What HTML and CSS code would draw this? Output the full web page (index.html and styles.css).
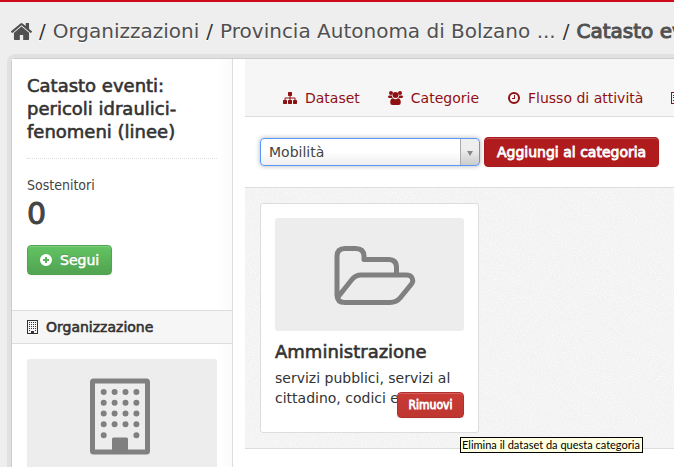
FILE: index.html
```html
<!DOCTYPE html>
<html lang="it">
<head>
    <meta charset="UTF-8">
    <meta name="viewport" content="width=device-width, initial-scale=1.0">
    <title>Catasto eventi: pericoli idraulici-fenomeni (linee)</title>
    <link rel="stylesheet" href="styles.css">
</head>
<body>
    <nav class="breadcrumb" aria-label="Percorso">
        <a href="#" class="home" aria-label="Home">
            <svg viewBox="96 253 1600 1283" width="21" height="17"><path d="M1472 992v480q0 26-19 45t-45 19h-384v-384h-256v384h-384q-26 0-45-19t-19-45v-480q0-1 .5-3t.5-3l575-474 575 474q1 2 1 6zm223-69l-62 74q-8 9-21 11h-3q-13 0-21-7l-692-577-692 577q-12 8-24 7-13-2-21-11l-62-74q-8-10-7-23.500t11-21.500l719-599q32-26 76-26t76 26l244 204v-195q0-14 9-23t23-9h192q14 0 23 9t9 23v408l219 182q10 8 11 21.500t-7 23.500z"/></svg>
        </a>
        <span class="divider">/</span>
        <a href="#">Organizzazioni</a>
        <span class="divider">/</span>
        <a href="#">Provincia Autonoma di Bolzano ...</a>
        <span class="divider">/</span>
        <a href="#" class="active">Catasto eventi: pericoli idraulici-fenomeni (linee)</a>
    </nav>

    <div class="wrapper">
        <!-- Barra laterale -->
        <aside class="sidebar">
            <section class="info">
                <h1>Catasto eventi: pericoli idraulici-fenomeni (linee)</h1>
                <dl class="nums">
                    <dt>Sostenitori</dt>
                    <dd>0</dd>
                </dl>
                <button type="button" class="btn btn-success">
                    <svg viewBox="0 0 12 12" width="12" height="12"><path fill-rule="evenodd" d="M6 0a6 6 0 1 0 0 12A6 6 0 0 0 6 0zM5 3h2v2h2v2H7v2H5V7H3V5h2z"/></svg>
                    Segui
                </button>
            </section>
            <section>
                <h2 class="module-heading">
                    <svg viewBox="0 0 11 14" width="11" height="14"><path fill-rule="evenodd" d="M0 0h11v14H0zM1 1v12h3v-2h3v2h3V1zM2 2h1v1H2zM4 2h1v1H4zM6 2h1v1H6zM8 2h1v1H8zM2 4h1v1H2zM4 4h1v1H4zM6 4h1v1H6zM8 4h1v1H8zM2 6h1v1H2zM4 6h1v1H4zM6 6h1v1H6zM8 6h1v1H8zM2 8h1v1H2zM4 8h1v1H4zM6 8h1v1H6zM8 8h1v1H8zM2 10h1v1H2zM8 10h1v1H8z"/></svg>
                    Organizzazione
                </h2>
                <div class="org-image">
                    <svg class="picture" viewBox="0 0 190 114" role="img" aria-label="Organizzazione">
                        <rect x="65.500" y="22" width="55" height="71" rx="1" fill="none" stroke="#808080" stroke-width="5"/>
                        <path fill="#808080" d="M85 95V80q0-1.500 1.500-1.500h13q1.500 0 1.500 1.500v15z"/>
                        <path fill="none" stroke="#808080" stroke-width="6" stroke-linecap="round" stroke-dasharray="0 10.900" d="M76.700 33h33M76.700 43.700h33M76.700 54.600h33M76.700 65.300h33"/>
                        <path fill="none" stroke="#808080" stroke-width="6" stroke-linecap="round" d="M76.700 76.200h.01M109.400 76.200h.01"/>
                    </svg>
                </div>
            </section>
        </aside>

        <!-- Contenuto principale -->
        <main class="primary">
            <nav class="tabs">
                <a href="#">
                    <svg viewBox="0 128 1792 1536" width="14" height="12"><path d="M1792 1248v320q0 40-28 68t-68 28h-320q-40 0-68-28t-28-68v-320q0-40 28-68t68-28h96v-192h-512v192h96q40 0 68 28t28 68v320q0 40-28 68t-68 28h-320q-40 0-68-28t-28-68v-320q0-40 28-68t68-28h96v-192h-512v192h96q40 0 68 28t28 68v320q0 40-28 68t-68 28h-320q-40 0-68-28t-28-68v-320q0-40 28-68t68-28h96v-192q0-52 38-90t90-38h512v-192h-96q-40 0-68-28t-28-68v-320q0-40 28-68t68-28h320q40 0 68 28t28 68v320q0 40-28 68t-68 28h-96v192h512q52 0 90 38t38 90v192h96q40 0 68 28t28 68z"/></svg>
                    Dataset
                </a>
                <a href="#">
                    <svg viewBox="0 0 15 14" width="15" height="14"><circle cx="3" cy="2" r="2"/><circle cx="12" cy="2" r="2"/><circle cx="7.500" cy="4" r="3"/><path d="M1 4.500h2.800q.2 1.800 1 2.500H1.500Q0 7 0 6q0-1.500 1-1.500zM14 4.500h-2.800q-.2 1.800-1 2.500h3.300Q15 7 15 6q0-1.500-1-1.500zM5 7.300q2.500 1.700 5 0 2.800.2 2.800 4.200 0 2.500-2.300 2.500h-6q-2.300 0-2.300-2.500 0-4 2.800-4.200z"/></svg>
                    Categorie
                </a>
                <a href="#">
                    <svg viewBox="-1 0 13 12" width="13" height="12"><circle cx="6" cy="6" r="5" fill="none" stroke="currentColor" stroke-width="2"/><path d="M6 3h1v4H4V6h2z"/></svg>
                    Flusso di attività
                </a>
                <a href="#">
                    <svg viewBox="0 0 14 12" width="14" height="12"><path fill-rule="evenodd" d="M0 0h14v12H0zM1 1v10h12V1zM2 3h2v1H2zM2 5h2v1H2zM2 8h2v1H2zM5 3h7v1H5zM5 5h7v1H5zM5 8h7v1H5z"/></svg>
                    Showcases
                </a>
            </nav>

            <form class="add-group">
                <div class="select-box">
                    <select aria-label="Categoria">
                        <option>Mobilità</option>
                    </select>
                </div>
                <button type="submit" class="btn btn-primary">Aggiungi al categoria</button>
            </form>

            <div class="media-grid">
                <article class="media-item">
                    <svg class="picture" viewBox="0 0 189 113" role="img" aria-label="Amministrazione">
                        <path fill="none" stroke="#808080" stroke-width="5" stroke-linejoin="round" d="M62 78V38.500q0-8 8-8h10.500q8.500 0 8.500 8v3h24.500q8 0 8 8V57M62 77q0 7.500 8 7.500h45q6.500 0 10.500-5l11-13.500q2.500-3 0-7-1.500-2-5-2H86q-5.500 0-9.500 5L63 79"/>
                    </svg>
                    <h3>Amministrazione</h3>
                    <p>servizi pubblici, servizi al cittadino, codici e</p>
                    <div class="remove">
                        <button type="button" class="btn btn-danger" aria-describedby="tip">Rimuovi</button>
                        <span class="tooltip" id="tip" role="tooltip">Elimina il dataset da questa categoria</span>
                    </div>
                </article>
            </div>
        </main>
    </div>
</body>
</html>
```

FILE: styles.css
```css
html {
    overflow: hidden;
}

body {
    margin: 0;
    border-top: 2px solid #ce0b19;
    background-color: #eee;
    color: #444;
    font-family: "DejaVu Sans", Verdana, sans-serif;
    font-size: 14px;
    line-height: 20px;
}

* {
    box-sizing: border-box;
}

svg {
    fill: currentColor;
    flex: none;
}

a {
    color: inherit;
    text-decoration: none;
}

h1, h2, h3 {
    margin: 0;
    color: #333;
    font-weight: normal;
    -webkit-text-stroke: 0.6px;
}

h1, h3 {
    font-size: 18px;
}

.breadcrumb {
    display: flex;
    align-items: center;
    gap: 7px;
    height: 56px;
    padding: 2px 0 0 11px;
    color: #505050;
    font-size: 20px;
    white-space: nowrap;
    text-shadow: 0 1px 0 #fff;
}

.breadcrumb .home {
    display: flex;
}

.breadcrumb .divider {
    color: #333;
}

.breadcrumb .active {
    -webkit-text-stroke: 1px;
}

.wrapper {
    display: flex;
    min-width: 940px;
    margin-left: 11px;
    border: 1px solid #ccc;
    border-radius: 4px 4px 0 0;
    background-color: #fff;
    box-shadow: 0 0 0 4px rgba(0, 0, 0, 0.05);
}

/* Barra laterale */
.sidebar {
    width: 221px;
    flex: none;
    border-right: 1px solid #ddd;
    background: linear-gradient(to right, #fff 94%, #fafafa);
}

.info {
    padding: 15px 15px 35px;
}

.info h1 {
    padding-bottom: 15px;
    border-bottom: 1px dotted #ddd;
    line-height: 23px;
}

.nums {
    margin: 16px 0;
}

.nums dt {
    font-family: "DejaVu Sans Condensed", "DejaVu Sans", sans-serif;
}

.nums dd {
    margin: 4px 0 0;
    font-size: 30px;
    line-height: 30px;
    -webkit-text-stroke: 1px;
}

.module-heading {
    display: flex;
    align-items: center;
    gap: 8px;
    padding: 6px 15px;
    border-top: 1px solid #ddd;
    border-bottom: 1px solid #ddd;
    background-color: #f6f6f6;
    font-size: 14px;
}

.org-image {
    padding: 15px;
}

.picture {
    display: block;
    width: 100%;
    border-radius: 3px;
    background-color: #ededed;
}

/* Contenuto principale */
.primary {
    flex: 1;
    min-width: 0;
    padding-left: 12px;
}

.tabs {
    display: flex;
    gap: 28px;
    height: 58px;
    padding: 29px 38px 0;
    border-bottom: 1px solid #ddd;
    background-color: #f6f6f6;
    color: #8f1013;
    white-space: nowrap;
}

.tabs a {
    display: flex;
    align-items: center;
    gap: 8px;
    height: 20px;
}

.add-group {
    display: flex;
    align-items: center;
    gap: 4px;
    padding: 20px 15px;
    border-bottom: 1px solid #ddd;
}

.select-box {
    position: relative;
    width: 220px;
}

.select-box::after {
    content: "";
    position: absolute;
    top: 13px;
    right: 7px;
    border: 3px solid transparent;
    border-top: 5px solid #888;
    border-bottom: 0;
    pointer-events: none;
}

.select-box select {
    display: block;
    width: 100%;
    height: 28px;
    padding: 0 28px 0 8px;
    border: 1px solid #5897fb;
    border-radius: 4px;
    appearance: none;
    background:
        linear-gradient(#aaa, #aaa) right 18px top / 1px 100% no-repeat,
        linear-gradient(#eee 40%, #ccc) right / 18px 100% no-repeat,
        linear-gradient(#fff 50%, #eee);
    box-shadow: 0 0 5px rgba(0, 0, 0, 0.3);
    color: #444;
    font: inherit;
}

.btn {
    display: flex;
    align-items: center;
    justify-content: center;
    border: 1px solid;
    border-radius: 4px;
    box-shadow: inset 0 1px 0 rgba(255, 255, 255, 0.2), 0 1px 2px rgba(0, 0, 0, 0.05);
    color: #fff;
    font: inherit;
    white-space: nowrap;
    text-shadow: 0 -1px 0 rgba(0, 0, 0, 0.25);
    cursor: pointer;
}

.btn-success {
    gap: 8px;
    height: 30px;
    padding: 0 12px;
    border-color: #51a351;
    background: linear-gradient(#62c462, #51a351);
    -webkit-text-stroke: 0.5px;
}

.btn-primary {
    height: 30px;
    padding: 0 12px;
    border-color: #a91a1c;
    background: #b01c1e;
    -webkit-text-stroke: 0.8px;
}

.btn-danger {
    min-width: 67px;
    height: 26px;
    padding: 0 9px;
    border-color: #b03030;
    background: linear-gradient(#c93b36, #bd362f);
    font-family: "DejaVu Sans Condensed", "DejaVu Sans", sans-serif;
    font-size: 12px;
    -webkit-text-stroke: 0.8px;
}

.media-grid {
    padding: 15px;
    border-bottom: 1px solid #ddd;
    background: #f2f2f2 url("data:image/svg+xml,%3Csvg xmlns='http://www.w3.org/2000/svg' width='100' height='100'%3E%3Cfilter id='n'%3E%3CfeTurbulence type='fractalNoise' baseFrequency='0.7' stitchTiles='stitch'/%3E%3CfeColorMatrix values='0 0 0 0 1 0 0 0 0 1 0 0 0 0 1 3 0 0 0 -1.3'/%3E%3C/filter%3E%3Crect width='100' height='100' filter='url(%23n)' opacity='0.6'/%3E%3C/svg%3E");
}

.media-item {
    position: relative;
    width: 219px;
    padding: 14px 14px 24px;
    border: 1px solid #ddd;
    border-radius: 3px;
    background-color: #fff;
}

.media-item h3 {
    margin: 11px 0 6px;
}

.media-item p {
    margin: 0;
    color: #333;
}

.remove {
    position: absolute;
    right: 14px;
    bottom: 14px;
}

.tooltip {
    position: absolute;
    top: 45px;
    left: 63px;
    padding: 0 2px 0 1px;
    border: 1px solid #000;
    background-color: #ffffe1;
    color: #000;
    font-family: Lato, sans-serif;
    font-size: 11px;
    line-height: 14px;
    white-space: nowrap;
}
```
